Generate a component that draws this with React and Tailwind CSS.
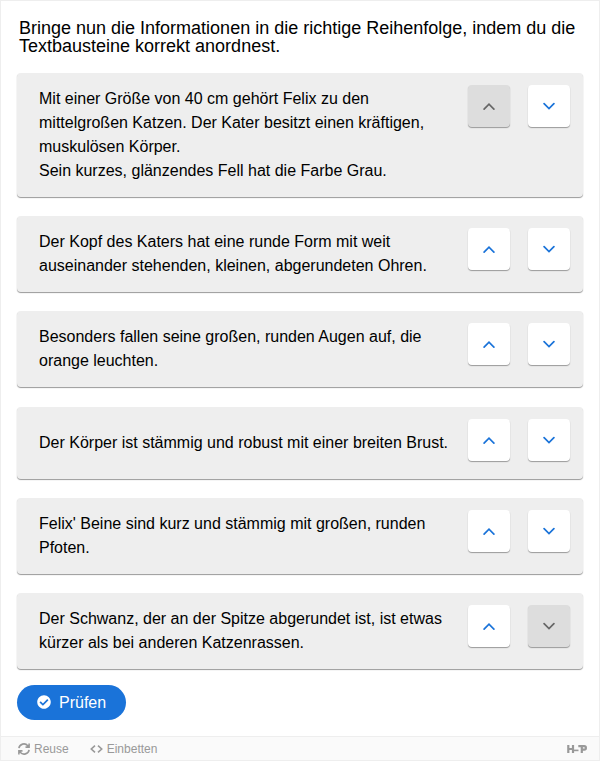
import React from 'react';
import { FaCheckCircle } from 'react-icons/fa';

const paragraphs = [
  [
    'Mit einer Größe von 40 cm gehört Felix zu den mittelgroßen Katzen. Der Kater besitzt einen kräftigen, muskulösen Körper.',
    'Sein kurzes, glänzendes Fell hat die Farbe Grau.',
  ],
  ['Der Kopf des Katers hat eine runde Form mit weit auseinander stehenden, kleinen, abgerundeten Ohren.'],
  ['Besonders fallen seine großen, runden Augen auf, die orange leuchten.'],
  ['Der Körper ist stämmig und robust mit einer breiten Brust.'],
  ["Felix' Beine sind kurz und stämmig mit großen, runden Pfoten."],
  ['Der Schwanz, der an der Spitze abgerundet ist, ist etwas kürzer als bei anderen Katzenrassen.'],
];

function MoveButton({ direction, disabled }) {
  return (
    <button
      disabled={disabled}
      aria-label={direction === 'up' ? 'Nach oben' : 'Nach unten'}
      className={`flex h-[42px] w-[42px] items-center justify-center rounded-[4px] shadow-[0_1px_1px_#999] ${
        disabled ? 'bg-[#dddddd] text-[#666666]' : 'bg-white text-[#1a73d9]'
      }`}
    >
      <svg
        width="12"
        height="8"
        viewBox="0 0 12 8"
        fill="none"
        stroke="currentColor"
        strokeWidth="1.7"
        strokeLinecap="round"
      >
        <path d={direction === 'up' ? 'M1.1 7.1L6 2.2L10.9 7.1' : 'M1.1 1.7L6 6.6L10.9 1.7'} />
      </svg>
    </button>
  );
}

function Paragraph({ lines, first, last }) {
  return (
    <li className="flex min-h-[72px] items-center rounded-[4px] bg-[#eeeeee] pl-[22px] pr-[13px] shadow-[0_1px_1px_#999]">
      <div className="flex-1 py-[14px] text-base leading-6">
        {lines.map((line) => (
          <p key={line}>{line}</p>
        ))}
      </div>
      <div className="ml-4 flex gap-[18px] self-start pt-3">
        <MoveButton direction="up" disabled={first} />
        <MoveButton direction="down" disabled={last} />
      </div>
    </li>
  );
}

function ReuseIcon() {
  return (
    <svg width="12" height="12" viewBox="0 0 12 12" fill="none" stroke="currentColor" strokeWidth="1.6">
      <path d="M0.9 5.2A5.1 5.1 0 0 1 9.8 2.7L11 3.9M11.1 0.5V4.1H7.5" />
      <path d="M11.1 6.8A5.1 5.1 0 0 1 2.2 9.3L1 8.1M0.9 11.5V7.9H4.5" />
    </svg>
  );
}

function EmbedIcon() {
  return (
    <svg width="13" height="8" viewBox="0 0 13 8" fill="none" stroke="currentColor" strokeWidth="1.6">
      <path d="M5 0.7L1.3 4L5 7.3M8 0.7L11.7 4L8 7.3" />
    </svg>
  );
}

// H, dash and P built from plain bars
function Logo() {
  return (
    <svg width="20" height="8" viewBox="0 0 20 8" fill="none" stroke="currentColor" strokeWidth="2">
      <path d="M1.3 0V8M6 0V8M1 4H7" strokeWidth="2.2" />
      <path d="M7 5.4H11.5" strokeWidth="1.6" />
      <path d="M11.3 1.2H17.2A1.7 1.7 0 0 1 17.2 4.6H15.5M14.8 1V8" strokeWidth="2.2" />
    </svg>
  );
}

export default function App() {
  return (
    <div className="flex h-[761px] w-full flex-col border border-[#eeeeee] bg-white font-['Liberation_Sans',Arial,sans-serif] text-black">
      <main className="flex-1 px-4 pt-[18px]">
        <h1 className="pl-0.5 text-lg leading-[18px]">
          Bringe nun die Informationen in die richtige Reihenfolge, indem du die Textbausteine korrekt anordnest.
        </h1>
        <ul className="mt-[18px] flex flex-col gap-[19.2px]">
          {paragraphs.map((lines, i) => (
            <Paragraph key={i} lines={lines} first={i === 0} last={i === paragraphs.length - 1} />
          ))}
        </ul>
        <button className="mt-4 flex h-[35px] w-[109px] items-center rounded-full bg-[#1a73d9] pl-5 pt-px text-base text-white">
          <FaCheckCircle className="mb-px mr-2 h-3.5 w-3.5" />
          Prüfen
        </button>
      </main>
      <footer className="flex h-6 items-center border-t border-[#eeeeee] bg-[#fafafa] pl-[17px] pr-3 pt-px text-xs text-[#999999]">
        <span className="flex items-center gap-1">
          <ReuseIcon />
          Reuse
        </span>
        <span className="ml-[21px] flex items-center gap-1">
          <EmbedIcon />
          Einbetten
        </span>
        <span className="ml-auto">
          <Logo />
        </span>
      </footer>
    </div>
  );
}
